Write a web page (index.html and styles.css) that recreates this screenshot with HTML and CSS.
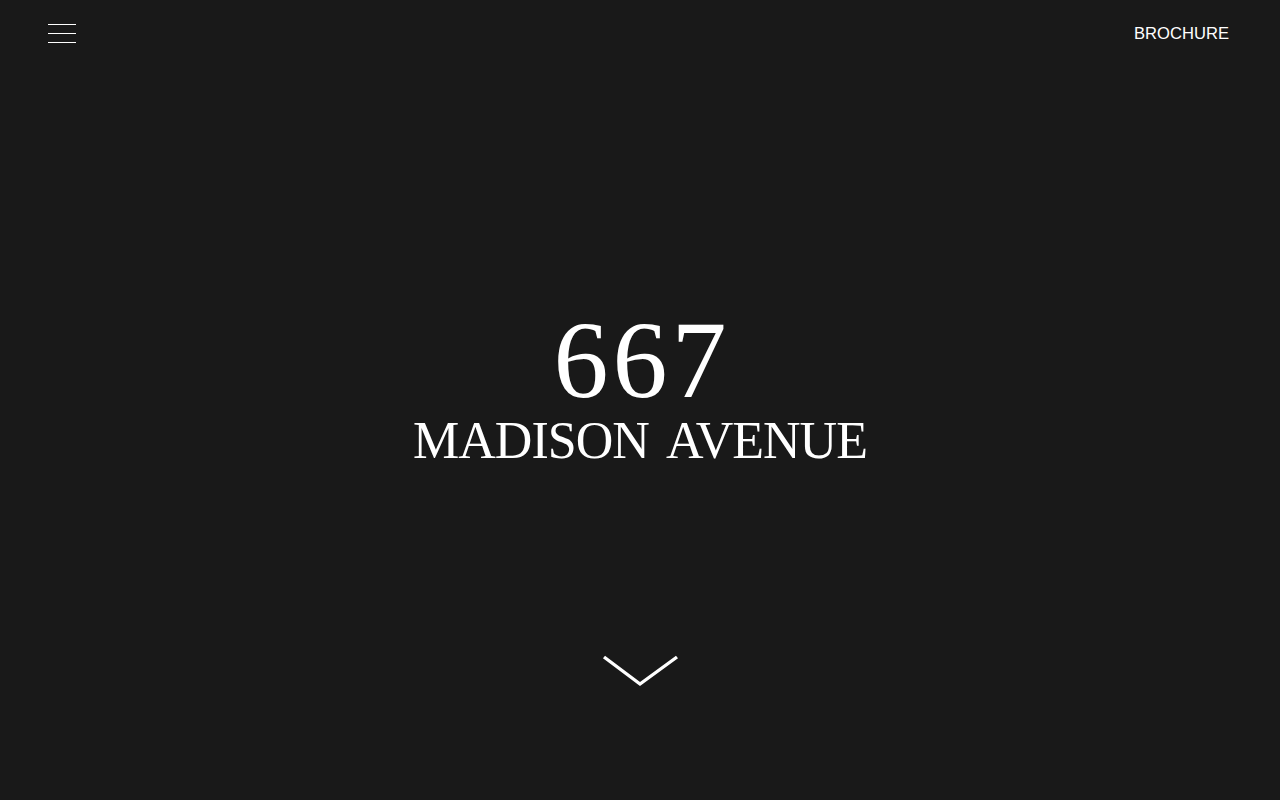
FILE: index.html
```html
<!DOCTYPE html>
<html lang="en">
<head>
<meta charset="utf-8">
<title>667 Madison Avenue</title>
<link rel="stylesheet" href="styles.css">
</head>
<body>
<header class="topbar">
  <button class="menu-btn" aria-label="Menu">
    <span class="menu-line"></span>
    <span class="menu-line"></span>
    <span class="menu-line"></span>
  </button>
  <a class="brochure" href="#">BROCHURE</a>
</header>
<main class="hero">
  <h1 class="hero-number">667</h1>
  <h2 class="hero-street">MADISON AVENUE</h2>
  <div class="scroll-cue">
    <svg width="80" height="40" viewBox="0 0 80 40" aria-hidden="true">
      <polyline points="4,7 40,34 77,7" fill="none" stroke="#ffffff" stroke-width="3.4"/>
    </svg>
  </div>
</main>
</body>
</html>
```
FILE: styles.css
```css
html, body {
  margin: 0;
  padding: 0;
}
body {
  background: #191919;
  color: #ffffff;
  width: 1280px;
  height: 800px;
  overflow: hidden;
  font-family: "Liberation Sans", Arial, sans-serif;
}
.topbar {
  height: 67px;
  display: flex;
  align-items: center;
  justify-content: space-between;
  padding: 0 51px 0 48px;
}
.menu-btn {
  background: none;
  border: 0;
  padding: 0;
  width: 28px;
  height: 19px;
  display: flex;
  flex-direction: column;
  justify-content: space-between;
  cursor: pointer;
}
.menu-line {
  display: block;
  width: 28px;
  height: 1px;
  background: #ffffff;
}
.brochure {
  color: #ffffff;
  text-decoration: none;
  font-size: 16.6px;
  line-height: 20px;
}
.hero {
  padding-top: 238px;
  text-align: center;
  font-family: "Liberation Serif", "Times New Roman", serif;
}
.hero-number {
  margin: 0;
  font-weight: normal;
  font-size: 110px;
  line-height: 110px;
  letter-spacing: 4px;
  padding-left: 4px;
}
.hero-street {
  margin: 0;
  font-weight: normal;
  font-size: 52px;
  line-height: 52px;
  letter-spacing: -1px;
  word-spacing: 8px;
}
.scroll-cue {
  margin-top: 183px;
  display: flex;
  justify-content: center;
}
.scroll-cue svg {
  display: block;
}
```
